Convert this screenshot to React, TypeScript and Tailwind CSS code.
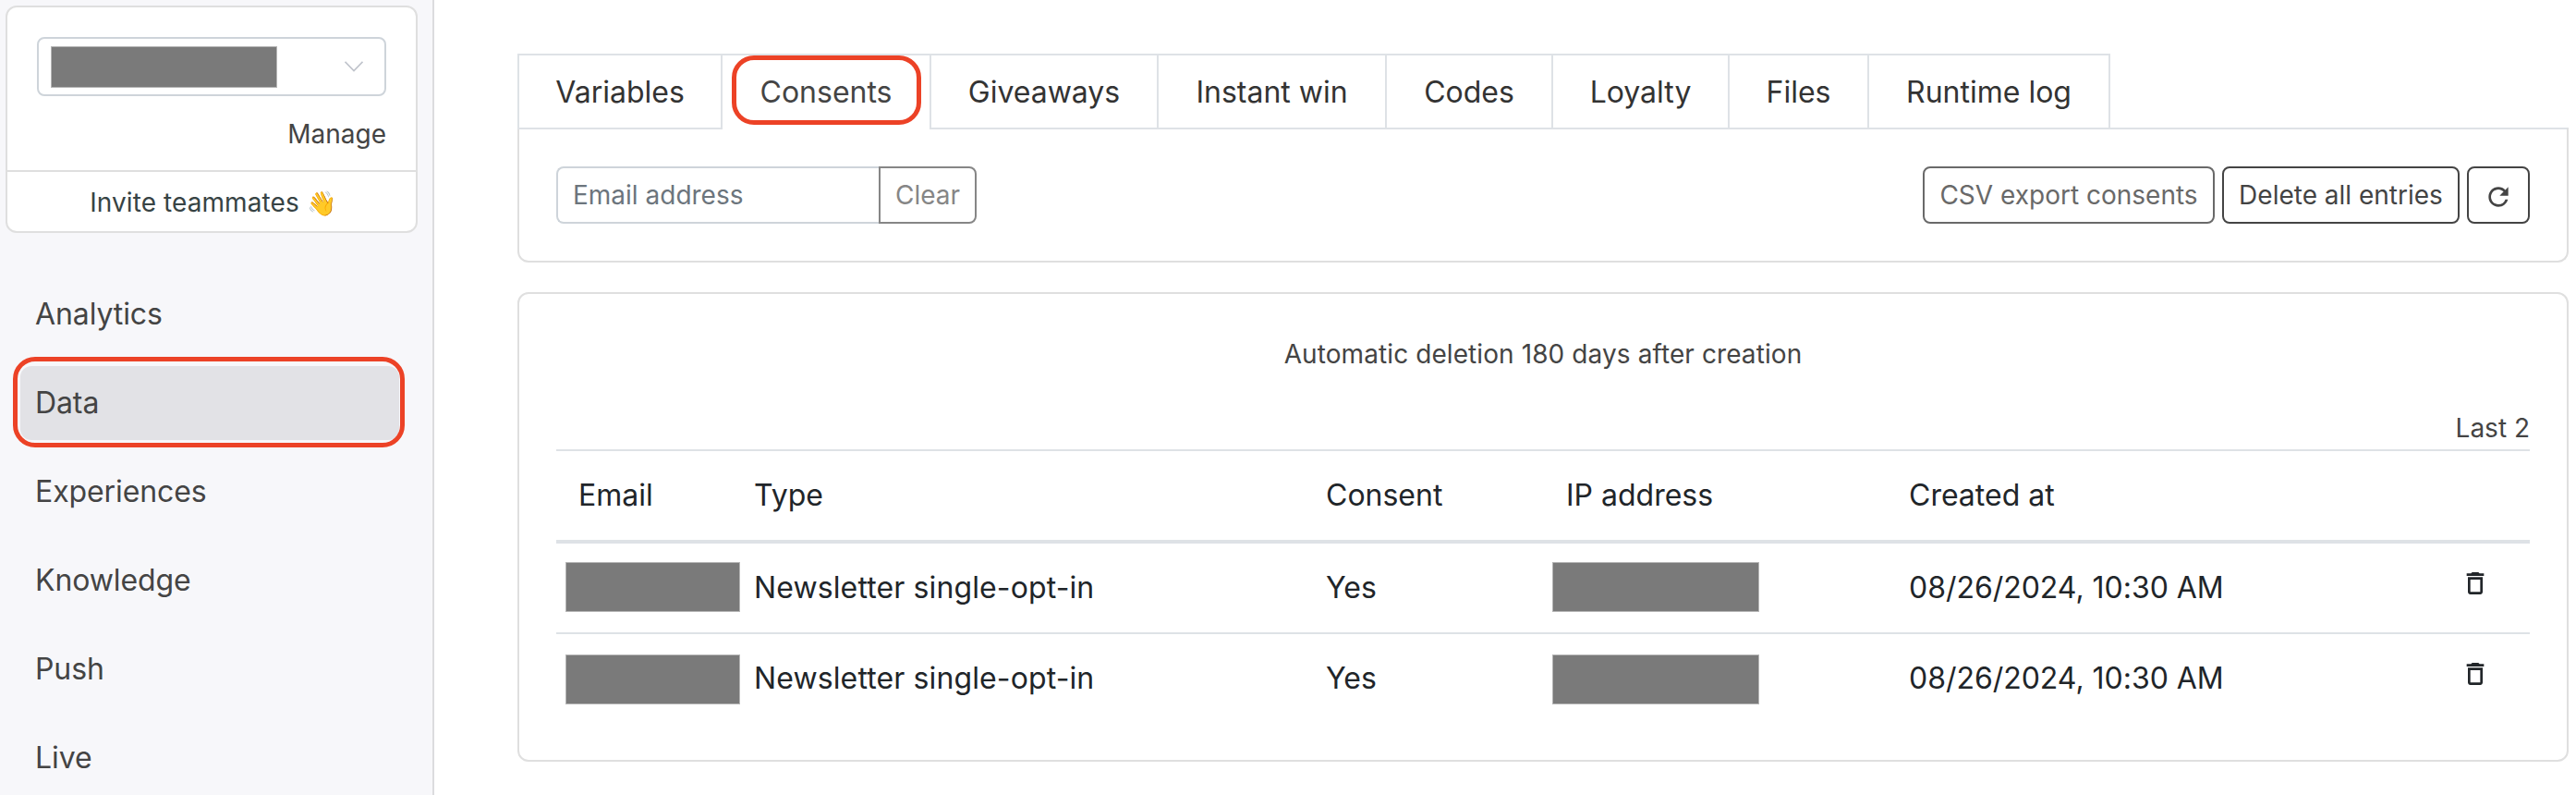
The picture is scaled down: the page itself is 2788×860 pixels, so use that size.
import { useState } from 'react';
import { MdDeleteOutline, MdRefresh } from 'react-icons/md';

const NAV_ITEMS = ['Analytics', 'Data', 'Experiences', 'Knowledge', 'Push', 'Live'];

const TABS = [
  { name: 'Variables', width: 'w-[222px]' },
  { name: 'Consents', width: 'w-[226px]' },
  { name: 'Giveaways', width: 'w-[246px]' },
  { name: 'Instant win', width: 'w-[247px]' },
  { name: 'Codes', width: 'w-[180px]' },
  { name: 'Loyalty', width: 'w-[191px]' },
  { name: 'Files', width: 'w-[151px]' },
  { name: 'Runtime log', width: 'w-[261px]' },
];

const CONSENTS = [
  { id: 1, type: 'Newsletter single-opt-in', consent: 'Yes', createdAt: '08/26/2024, 10:30 AM' },
  { id: 2, type: 'Newsletter single-opt-in', consent: 'Yes', createdAt: '08/26/2024, 10:30 AM' },
];

const COLUMNS = 'grid grid-cols-[214px_618px_246px_386px_1fr_89px] items-center';

function Sidebar() {
  const [active, setActive] = useState('Data');

  return (
    <aside className="w-[470px] shrink-0 bg-[#f7f7fa] border-r-2 border-[#dcdcde] pt-1.5">
      <div className="ml-1.5 w-[446px] h-[246px] bg-white border-2 border-[#dfdfdf] rounded-xl">
        <div className="h-[178px] border-b-2 border-[#dfdfdf] px-8 pt-8">
          <div className="flex h-16 items-center justify-between rounded-lg border-2 border-[#ced4da] pl-[13px] pr-[23px]">
            <div className="h-[45px] w-[245px] bg-[#7a7a7a] border border-[#b5b5b5]" />
            <svg className="w-[20px] h-[12px]" viewBox="0 0 20 12" fill="none" stroke="#c0c4cc" strokeWidth="1.7">
              <path d="M0.5 0.8 L10 10.6 L19.5 0.8" />
            </svg>
          </div>
          <div className="mt-[20px] text-right text-[28px] leading-[42px] text-[#444]">Manage</div>
        </div>
        <div className="flex h-[64px] items-center justify-center gap-2 pt-0.5 pl-[3px] text-[28px] text-[#374344]">
          <span className="tracking-[0.08px]">Invite teammates</span>
          <span className="text-[26px]">👋</span>
        </div>
      </div>

      <nav className="mt-12 ml-[22px] w-[410px] flex flex-col gap-4">
        {NAV_ITEMS.map((item) => (
          <button
            key={item}
            onClick={() => setActive(item)}
            className={`relative h-20 rounded-xl pl-4 text-left text-[32px] tracking-[-0.1px] text-[#444] ${item === active ? 'bg-[#e2e2e6]' : ''}`}
          >
            {item}
            {item === active && (
              <span className="absolute -left-2 -right-[6px] -top-[10px] -bottom-2 rounded-[24px] border-[5px] border-[#ec4226]" />
            )}
          </button>
        ))}
      </nav>
    </aside>
  );
}

function Tabs() {
  const [active, setActive] = useState('Consents');

  return (
    <div className="flex h-20">
      {TABS.map((tab) => (
        <button
          key={tab.name}
          onClick={() => setActive(tab.name)}
          className={`relative ${tab.width} h-[82px] shrink-0 border-t-2 border-r-2 border-[#dee2e6] text-[32px] first:border-l-2 ${tab.name === active ? 'text-[#444] bg-white' : 'text-[#333] border-b-2 pt-0.5'}`}
        >
          {tab.name}
          {tab.name === active && (
            <span className="absolute left-[10px] right-[9px] top-0 h-[75px] rounded-[24px] border-[5px] border-[#ec4226]" />
          )}
        </button>
      ))}
    </div>
  );
}

function Toolbar() {
  return (
    <div className="flex h-[146px] items-start justify-between rounded-b-xl border-2 border-[#dfdfdf] border-t-[#dee2e6] px-10 pt-10 text-[28px]">
      <div className="flex h-[62px]">
        <input
          type="text"
          placeholder="Email address"
          className="w-[349px] rounded-l-lg border-2 border-r-0 border-[#ced4da] pl-4 outline-none placeholder:text-[#6c757d]"
        />
        <button className="w-[106px] rounded-r-lg border-2 border-[#868686] text-[#868686]">Clear</button>
      </div>
      <div className="flex h-[62px] gap-2">
        <button className="w-[316px] rounded-lg border-2 border-[#696969] text-[#696969]">CSV export consents</button>
        <button className="w-[257px] rounded-lg border-2 border-[#444] text-[#444]">Delete all entries</button>
        <button className="flex w-[68px] items-center justify-center rounded-lg border-2 border-[#444] text-[#444]">
          <MdRefresh className="mt-1 size-8" />
        </button>
      </div>
    </div>
  );
}

function ConsentTable() {
  return (
    <div className="mt-8 h-[508px] rounded-xl border-2 border-[#dfdfdf] px-10">
      <p className="mt-[44px] text-center text-[28px] leading-[42px] tracking-[0.09px] text-[#444]">
        Automatic deletion 180 days after creation
      </p>
      <p className="mt-[38px] text-right text-[28px] leading-[42px] text-[#444]">Last 2</p>

      <div className="mt-[2px] text-[32px] text-[#212529]">
        <div className={`${COLUMNS} h-[102px] border-t-2 border-b-4 border-[#dee2e6]`}>
          <div className="pl-6">Email</div>
          <div>Type</div>
          <div className="pl-px">Consent</div>
          <div className="pl-[15px]">IP address</div>
          <div>Created at</div>
        </div>
        {CONSENTS.map((row) => (
          <div key={row.id} className={`group ${COLUMNS} h-[98px] border-b-2 border-[#dee2e6] last:h-24 last:border-b-0`}>
            <div className="ml-[10px] -mt-0.5 h-[54px] w-[189px] bg-[#7a7a7a] border border-[#b5b5b5] group-last:mt-0.5" />
            <div className="tracking-[0.12px]">{row.type}</div>
            <div className="pl-px">{row.consent}</div>
            <div className="-mt-0.5 h-[54px] w-[224px] bg-[#7a7a7a] border border-[#b5b5b5] group-last:mt-0.5" />
            <div className="tracking-[-0.03px]">{row.createdAt}</div>
            <button className="flex pl-[14px] -mt-[10px]" aria-label="Delete">
              <MdDeleteOutline className="size-8" />
            </button>
          </div>
        ))}
      </div>
    </div>
  );
}

export default function App() {
  return (
    <div className="flex h-[860px] w-[2788px] overflow-hidden bg-white font-['Inter',sans-serif]">
      <Sidebar />
      <main className="ml-[90px] w-[2220px] pt-[58px]">
        <Tabs />
        <Toolbar />
        <ConsentTable />
      </main>
    </div>
  );
}
